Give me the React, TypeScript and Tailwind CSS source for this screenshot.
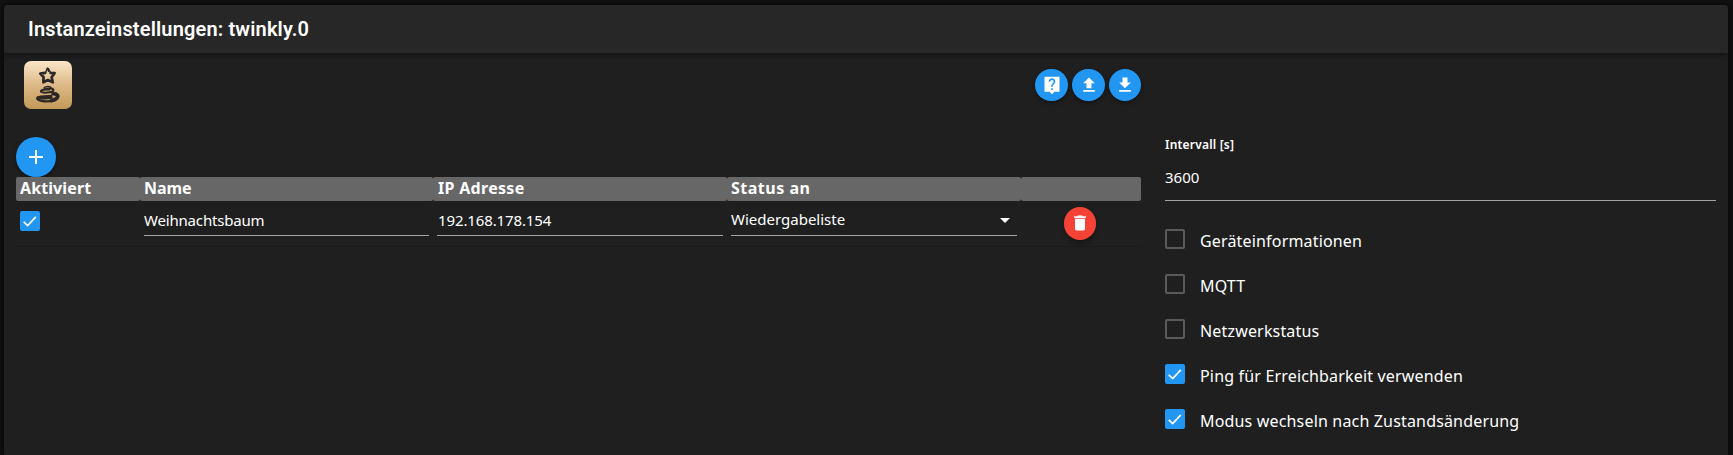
import type { ReactNode } from "react";

const MATERIAL = {
  help: "M21 2H3v18h6l3 3 3-3h6V2zm-8 16h-2v-2h2v2zm2.070-7.750l-.9.92C13.450 11.900 13 12.500 13 14h-2v-.5c0-1.100.45-2.100 1.170-2.830l1.240-1.260c.37-.36.59-.86.59-1.410 0-1.100-.9-2-2-2s-2 .9-2 2H8c0-2.210 1.790-4 4-4s4 1.790 4 4c0 .88-.36 1.680-.93 2.250z",
  upload: "M9 16h6v-6h4l-7-7-7 7h4zm-4 2h14v2H5z",
  download: "M19 9h-4V3H9v6H5l7 7 7-7zM5 18v2h14v-2H5z",
  add: "M19 13h-6v6h-2v-6H5v-2h6V5h2v6h6v2z",
  trash: "M6 19c0 1.1.9 2 2 2h8c1.1 0 2-.9 2-2V7H6v12zM19 4h-3.5l-1-1h-5l-1 1H5v2h14V4z",
  drop: "M7 10l5 5 5-5z",
};

function Icon({ d, className }: { d: string; className: string }) {
  return (
    <svg viewBox="0 0 24 24" fill="currentColor" className={className}>
      <path d={d} />
    </svg>
  );
}

function Fab({ children, className }: { children: ReactNode; className: string }) {
  return (
    <button
      className={`flex shrink-0 items-center justify-center rounded-full text-white shadow-[0_2px_4px_rgba(0,0,0,0.4)] ${className}`}
    >
      {children}
    </button>
  );
}

function Check({ on }: { on: boolean }) {
  return on ? (
    <span className="flex size-5 shrink-0 items-center justify-center rounded-[2px] bg-[#2196f3]">
      <svg viewBox="0 0 20 20" className="size-5" fill="none" stroke="#fff" strokeWidth="1.7">
        <path d="M3.7 10.9 7.7 14.6 15.8 5.8" />
      </svg>
    </span>
  ) : (
    <span className="size-5 shrink-0 rounded-[2px] border-2 border-[#5a5a5a]" />
  );
}

function AdapterLogo() {
  return (
    <svg viewBox="0 0 48 48" className="size-12">
      <defs>
        <linearGradient id="gold" x1="0" y1="0" x2="0" y2="1">
          <stop offset="0" stopColor="#fbe6c8" />
          <stop offset="0.55" stopColor="#d9b582" />
          <stop offset="1" stopColor="#c49a58" />
        </linearGradient>
      </defs>
      <rect width="48" height="48" rx="7" fill="url(#gold)" />
      <g fill="none" stroke="#2a2724" strokeLinejoin="round" strokeLinecap="round">
        <path strokeWidth="1.3" d="M24.500 10.500 23.300 6.900 21.600 11.400M24.500 7.500 26.600 11.600" />
        <path strokeWidth="2.700" d="M21.200 11.800 16.300 12.600 19.500 16 19.400 21.300 23.800 19 28.800 21.300 27.600 16.300 30.600 12.200 26.600 12" />
        <path strokeWidth="1.400" d="M24.300 25.500c-2.500.2-4.500.9-4.200 1.700.4 1 6.500.7 6.900-.4.2-.9-1.500-1.300-2.700-1.300" />
        <path strokeWidth="2" d="M27 27.500c3.600.4 3.300 2.900-1.300 3.700-4.400.8-9 .5-8.800-1.100.2-1.300 5-1.900 8.500-1.500" />
        <path strokeWidth="2.400" d="M27.500 36.500c-4.600 1-12 1.100-12.500-.1 1.500-1.600 7.500-.3 12-1.400M13.800 36.300c-1.700 1.900 1 3.600 6 4 6.500.4 12.600-1 13.900-4.400" />
        <path strokeWidth="3.700" d="M29 32.700c4.400.1 6 2.300 3.600 4.700-1.200 1.100-3.200 1.900-5.200 2.200" />
      </g>
    </svg>
  );
}

const options = [
  { label: "Geräteinformationen", on: false },
  { label: "MQTT", on: false },
  { label: "Netzwerkstatus", on: false },
  { label: "Ping für Erreichbarkeit verwenden", on: true },
  { label: "Modus wechseln nach Zustandsänderung", on: true },
];

export default function App() {
  return (
    <div className="h-[455px] overflow-hidden bg-[#121212] pt-[5px] pr-[5px] pl-1 font-['Noto_Sans','Open_Sans',sans-serif] text-white">
      <div className="flex h-[450px] flex-col overflow-hidden rounded-t bg-[#1f1f1f] shadow-[0_0_6px_#000]">
        <header className="z-10 flex h-12 shrink-0 items-center bg-[#272727] pl-6 shadow-[0_2px_5px_rgba(0,0,0,0.4)]">
          <h1 className="font-['Roboto',sans-serif] text-xl leading-8 font-semibold tracking-[0.15px] whitespace-nowrap">
            Instanzeinstellungen: twinkly.0
          </h1>
        </header>
        <div className="flex pr-3 pl-3">
          <section className="w-[1125px] shrink-0">
            <div className="flex h-[84px] items-start justify-between pt-2 pl-2">
              <AdapterLogo />
              <div className="flex gap-1 pt-2">
                <Fab className="h-8 w-[33px] bg-[#2196f3]"><Icon d={MATERIAL.help} className="size-5" /></Fab>
                <Fab className="h-8 w-[33px] bg-[#2196f3]"><Icon d={MATERIAL.upload} className="size-5" /></Fab>
                <Fab className="size-8 bg-[#2196f3]"><Icon d={MATERIAL.download} className="size-5" /></Fab>
              </div>
            </div>
            <Fab className="size-10 bg-[#2196f3]"><Icon d={MATERIAL.add} className="size-6" /></Fab>
            <div className="grid h-6 grid-cols-[124px_293px_294px_294px_120px] text-base leading-[23px] font-bold">
              <div className="rounded-[2px] bg-[#676767] pl-1 tracking-[0.1px]">Aktiviert</div>
              <div className="rounded-[2px] bg-[#676767] pl-1 tracking-[-0.1px]">Name</div>
              <div className="rounded-[2px] bg-[#676767] pl-[5px] tracking-[0.3px]">IP Adresse</div>
              <div className="rounded-[2px] bg-[#676767] pl-1 tracking-[0.5px]">Status an</div>
              <div className="rounded-[2px] bg-[#676767]" />
            </div>
            <div className="grid h-[46px] grid-cols-[124px_293px_294px_294px_120px] border-b border-[#1b1b1b] text-[15px]">
              <div className="pt-2.5 pl-1"><Check on /></div>
              <div className="pl-1">
                <div className="h-[35px] w-[285px] border-b border-[#a5a5a5] leading-[38px] tracking-[-0.18px]">Weihnachtsbaum</div>
              </div>
              <div className="pl-1">
                <div className="h-[35px] w-[286px] border-b border-[#a5a5a5] pl-px leading-[38px] tracking-[-0.12px]">192.168.178.154</div>
              </div>
              <div className="pl-1">
                <div className="flex h-[35px] w-[286px] items-center justify-between border-b border-[#a5a5a5] leading-9">
                  <span className="pt-0.5">Wiedergabeliste</span>
                  <Icon d={MATERIAL.drop} className="mt-1 size-6" />
                </div>
              </div>
              <div className="pt-1.5 pl-[43px]">
                <Fab className="h-[33px] w-8 bg-[#f44336]"><Icon d={MATERIAL.trash} className="mb-px size-5" /></Fab>
              </div>
            </div>
          </section>
          <section className="ml-6 flex-1 pt-[84px]">
            <div className="h-4 text-[12px] leading-4 font-semibold tracking-[0.2px]">Intervall [s]</div>
            <div className="h-12 border-b border-[#a5a5a5] pt-3 text-[15px] leading-6">3600</div>
            <div className="mt-[17px]">
              {options.map((o) => (
                <label key={o.label} className="flex h-[45px] items-start pt-[11px] text-base">
                  <Check on={o.on} />
                  <span className="ml-[15px] leading-6 tracking-[0.17px] whitespace-nowrap">{o.label}</span>
                </label>
              ))}
            </div>
          </section>
        </div>
      </div>
    </div>
  );
}
